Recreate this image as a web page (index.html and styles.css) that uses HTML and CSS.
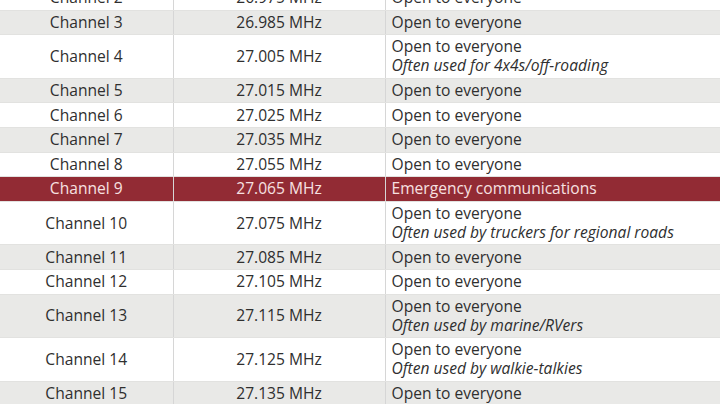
FILE: index.html
```html
<!DOCTYPE html>
<html>
<head>
<meta charset="utf-8">
<link rel="stylesheet" href="styles.css">
</head>
<body>
<table class="cb">
<tbody>
<tr class="w"><td class="ch">Channel 2</td><td class="fq">26.975 MHz</td><td class="use">Open to everyone</td></tr>
<tr class="g"><td class="ch">Channel 3</td><td class="fq">26.985 MHz</td><td class="use">Open to everyone</td></tr>
<tr class="w"><td class="ch">Channel 4</td><td class="fq">27.005 MHz</td><td class="use"><span class="ln">Open to everyone</span><em class="ln">Often used for 4x4s/off-roading</em></td></tr>
<tr class="g"><td class="ch">Channel 5</td><td class="fq">27.015 MHz</td><td class="use">Open to everyone</td></tr>
<tr class="w"><td class="ch">Channel 6</td><td class="fq">27.025 MHz</td><td class="use">Open to everyone</td></tr>
<tr class="g"><td class="ch">Channel 7</td><td class="fq">27.035 MHz</td><td class="use">Open to everyone</td></tr>
<tr class="w"><td class="ch">Channel 8</td><td class="fq">27.055 MHz</td><td class="use">Open to everyone</td></tr>
<tr class="r"><td class="ch">Channel 9</td><td class="fq">27.065 MHz</td><td class="use">Emergency communications</td></tr>
<tr class="w"><td class="ch">Channel 10</td><td class="fq">27.075 MHz</td><td class="use"><span class="ln">Open to everyone</span><em class="ln">Often used by truckers for regional roads</em></td></tr>
<tr class="g"><td class="ch">Channel 11</td><td class="fq">27.085 MHz</td><td class="use">Open to everyone</td></tr>
<tr class="w"><td class="ch">Channel 12</td><td class="fq">27.105 MHz</td><td class="use">Open to everyone</td></tr>
<tr class="g"><td class="ch">Channel 13</td><td class="fq">27.115 MHz</td><td class="use"><span class="ln">Open to everyone</span><em class="ln">Often used by marine/RVers</em></td></tr>
<tr class="w"><td class="ch">Channel 14</td><td class="fq">27.125 MHz</td><td class="use"><span class="ln">Open to everyone</span><em class="ln">Often used by walkie-talkies</em></td></tr>
<tr class="g"><td class="ch">Channel 15</td><td class="fq">27.135 MHz</td><td class="use">Open to everyone</td></tr>
</tbody>
</table>
</body>
</html>
```
FILE: styles.css
```css
html, body {
  margin: 0;
  padding: 0;
  background: #ffffff;
  overflow: hidden;
}
body {
  font-family: "Open Sans", "Liberation Sans", sans-serif;
  font-size: 15.6px;
  color: #2f2f2f;
}
.cb {
  width: 720px;
  border-collapse: collapse;
  margin-top: -14px;
  table-layout: fixed;
}
.cb td {
  padding: 2.3px 6px;
  line-height: 19px;
  border-bottom: 1px solid #e2e2e0;
  vertical-align: middle;
}
.cb td.ch {
  width: 173px;
  box-sizing: border-box;
  text-align: center;
  border-right: 1px solid #d6d6d6;
}
.cb td.fq {
  width: 212px;
  box-sizing: border-box;
  text-align: center;
  border-right: 1px solid #d6d6d6;
}
.cb td.use {
  text-align: left;
}
.ln {
  display: block;
  line-height: 19px;
}
.cb em {
  font-style: italic;
}
.g td { background: #e9e9e7; }
.w td { background: #ffffff; }
.r td {
  background: #922b34;
  color: #f7e1e1;
}
```
